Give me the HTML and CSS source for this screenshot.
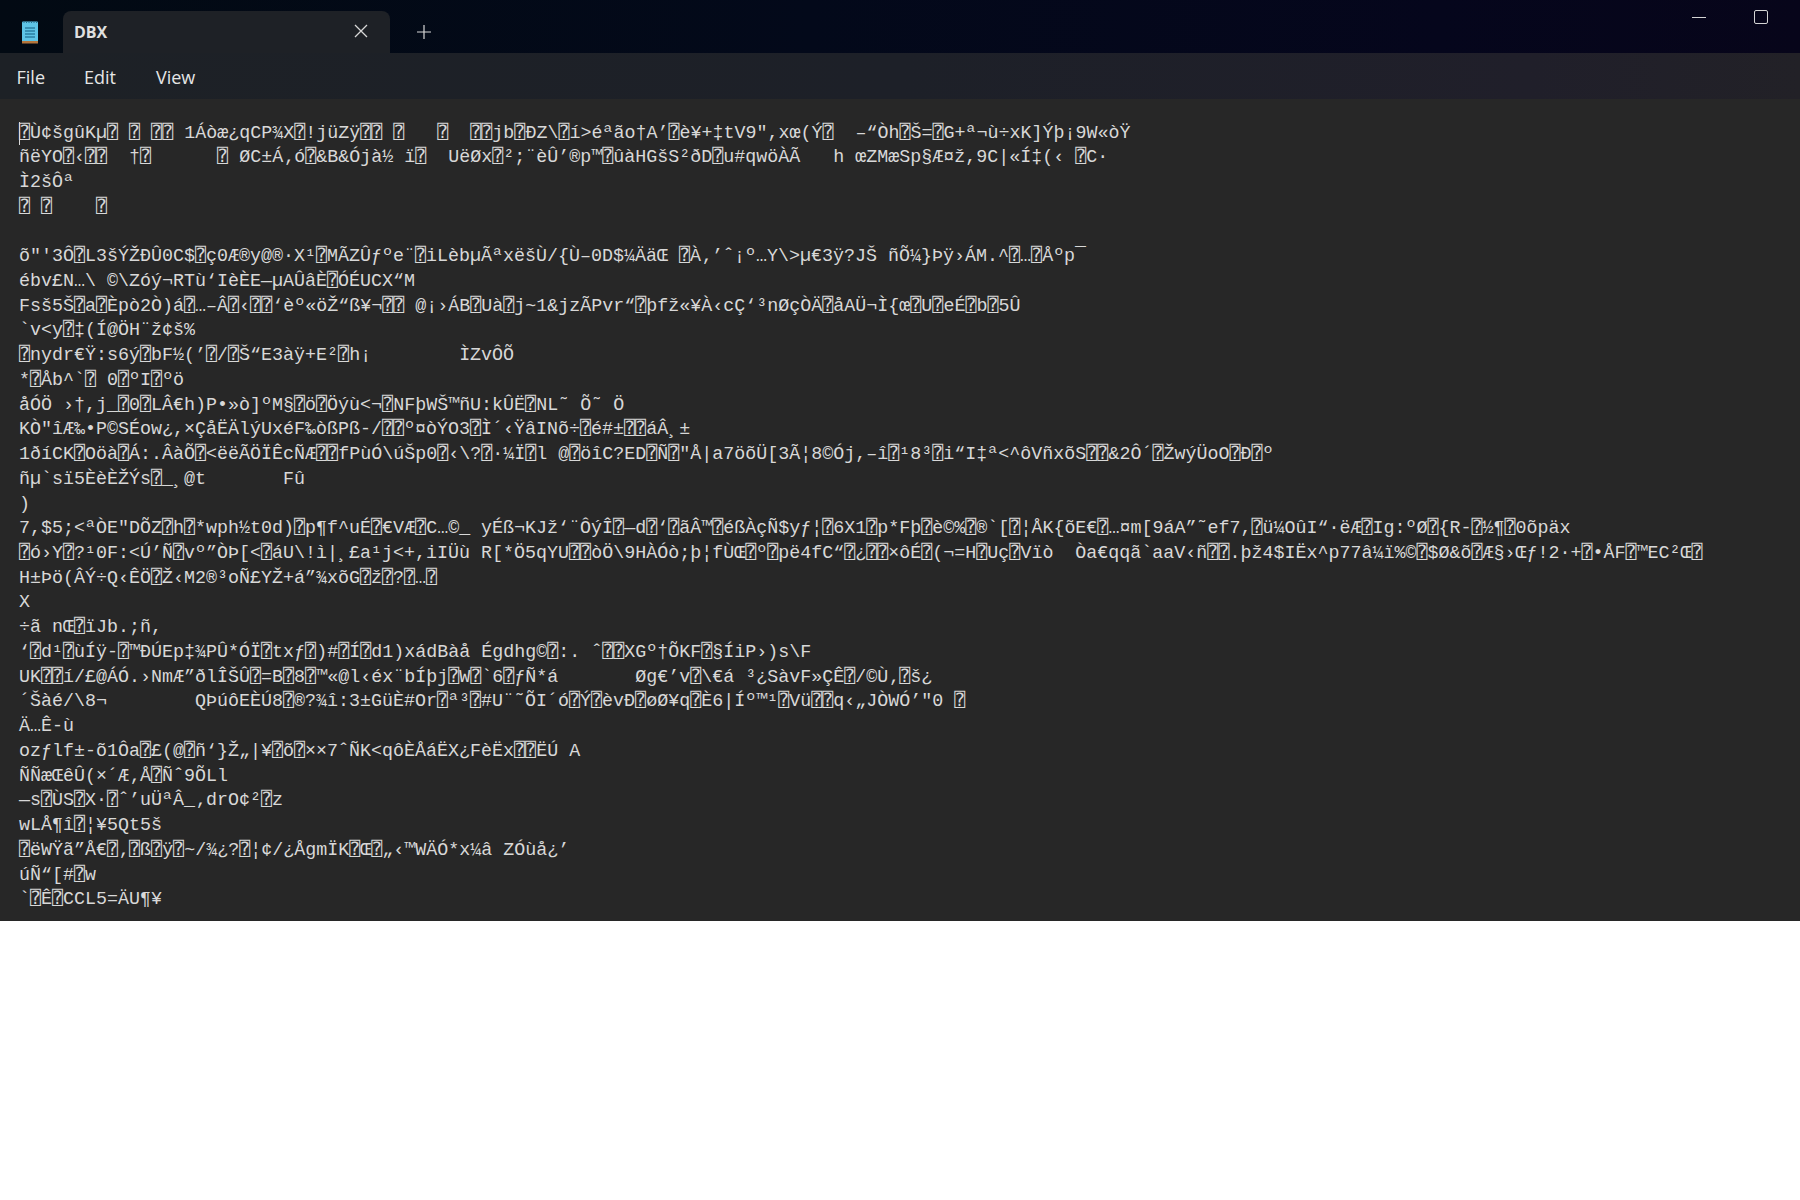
FILE: index.html
```
<!DOCTYPE html>
<html lang="en">
<head>
<meta charset="utf-8">
<title>DBX - Notepad</title>
<link rel="stylesheet" href="styles.css">
</head>
<body>
<div class="window">
  <header class="titlebar">
    <svg class="app-icon" width="18" height="24" viewBox="0 0 18 24" aria-hidden="true">
      <rect x="1" y="1.5" width="16" height="21" rx="1" fill="#5ec4e6"/>
      <rect x="1" y="21" width="16" height="2.5" fill="#b5763c"/>
      <path d="M3 1v2M5.5 1v2M8 1v2M10.5 1v2M13 1v2M15.5 1v2" stroke="#2a6f8c" stroke-width="1"/>
      <path d="M4 8h10M4 11h10M4 14h10M4 17h10" stroke="#2b7fa3" stroke-width="1.4"/>
    </svg>
    <div class="tab">
      <span class="tab-title">DBX</span>
      <svg class="tab-close" width="14" height="14" viewBox="0 0 14 14" aria-hidden="true"><path d="M1 1l12 12M13 1L1 13" stroke="#d8d8d8" stroke-width="1.3" fill="none"/></svg>
    </div>
    <svg class="tab-add" width="14" height="14" viewBox="0 0 14 14" aria-hidden="true"><path d="M7 0v14M0 7h14" stroke="#d8d8d8" stroke-width="1.2" fill="none"/></svg>
    <div class="controls">
      <span class="ctl-min"></span>
      <span class="ctl-max"></span>
    </div>
  </header>
  <nav class="menubar">
    <span class="menu-item menu-file">File</span>
    <span class="menu-item menu-edit">Edit</span>
    <span class="menu-item menu-view">View</span>
  </nav>
  <main class="editor"><span class="caret"></span><pre class="content">⍰Ù¢šgûKµ⍰ ⍰ ⍰⍰ 1Áòæ¿qCP¾X⍰!jüZÿ⍰⍰ ⍰   ⍰  ⍰⍰jb⍰ÐZ\⍰í&gt;éªão†A’⍰è¥+‡tV9",xœ(Ý⍰  –“Òh⍰Š=⍰G+ª¬ù÷xK]Ýþ¡9W«òŸ
ñëYO⍰‹⍰⍰  †⍰      ⍰ ØC±Á‚ó⍰&amp;B&amp;Ójà½ ï⍰  UëØx⍰²;¨èÛ’®p™⍰ûàHGšS²ðD⍰u#qwöÀÃ   h œZMæSp§Æ¤ž,9C|«Í‡(‹ ⍰C·
Ì2šÔª
⍰ ⍰    ⍰

õ"'3Ô⍰L3šÝŽÐÛ0C$⍰ç0Æ®y@®·X¹⍰MÃZÛƒºe¨⍰iLèbµÃªxëšÙ/{Ù–0D$¼ÄäŒ ⍰À‚’ˆ¡º…Y\&gt;µ€3ÿ?JŠ ñÕ¼}Þÿ›ÁM.^⍰…⍰Åºp¯
ébv£N…\ ©\Zóý¬RTù‘IèÈE—µAÛâÈ⍰ÓÉUCX“M
Fsš5Š⍰a⍰Èpò2Ò)á⍰…–Â⍰‹⍰⍰‘èº«öŽ“ß¥¬⍰⍰ @¡›ÁB⍰Uà⍰j~1&amp;jzÃPvr“⍰þfž«¥À‹cÇ‘³nØçÒÄ⍰åAÜ¬Ì{œ⍰U⍰eÉ⍰b⍰5Û
`v&lt;y⍰‡(Í@ÖH¨ž¢š%
⍰nydr€Ÿ:s6ý⍰bF½(’⍰/⍰Š“E3àÿ+E²⍰h¡        ÌZvÔÕ
*⍰Åb^`⍰ 0⍰ºI⍰ºö
åÓÖ ›†,j_⍰0⍰LÂ€h)P•»ò]ºM§⍰ö⍰Öýù&lt;¬⍰NFþWŠ™ñU:kÛË⍰NL˜ Õ˜ Ö
KÒ"îÆ‰•P©SÉow¿,×ÇåËÄlýUxéF‰òßPß-/⍰⍰º¤òÝO3⍰Ì´‹ŸâINõ÷⍰é#±⍰⍰áÂ¸±
1ðíCK⍰Oöà⍰Á:.ÂàÕ⍰&lt;ëëÃÖÏÊcÑÆ⍰⍰fPùÓ\úŠp0⍰‹\?⍰·¼Ï⍰l @⍰öîC?ED⍰Ñ⍰"Å|a7öõÜ[3Ã¦8©Ój,–î⍰¹8³⍰i“I‡ª&lt;^ôVñxõS⍰⍰&amp;2Ô´⍰ŽwýÜoO⍰Ð⍰º
ñµ`sï5ÈèÈŽÝs⍰_¸@t       Fû
)
7,$5;&lt;ªÒE"DÕZ⍰h⍰*wph½t0d)⍰p¶f^uÉ⍰€VÆ⍰C…©_ yÉß¬KJž‘¨ÔýÎ⍰—d⍰‘⍰ãÂ™⍰éßÀçÑ$yƒ¦⍰6X1⍰p*Fþ⍰è©%⍰®`[⍰¦ÅK{õE€⍰…¤m[9áA”˜ef7,⍰ü¼OûI“·ëÆ⍰Ig:ºØ⍰{R-⍰½¶⍰0õpäx
⍰ó›Y⍰?¹0F:&lt;Ú’Ñ⍰vº”ÒÞ[&lt;⍰áU\!ì|¸£a¹j&lt;+,iIÜù R[*Ö5qYU⍰⍰òÖ\9HÀÓò;þ¦fÙŒ⍰º⍰pë4fC“⍰¿⍰⍰×ôÉ⍰(¬=H⍰Uç⍰Vïò  Òa€qqã`aaV‹ñ⍰⍰.þž4$IËx^p77â¼ï%©⍰$Ø&amp;õ⍰Æ§›Œƒ!2·+⍰•ÅF⍰™EC²Œ⍰
H±Þö(ÂÝ÷Q‹ÊÖ⍰Ž‹M2®³oÑ£YŽ+á”¾xõG⍰ž⍰?⍰…⍰
X
÷ã nŒ⍰ïJb.;ñ,
‘⍰d¹⍰ùÍÿ-⍰™ÐÚEp‡¾PÛ*ÓÏ⍰txƒ⍰)#⍰Í⍰d1)xádBàå Égdhg©⍰:. ˆ⍰⍰XGº†ÕKF⍰§ÍiP›)s\F
UK⍰⍰í/£@ÁÓ.›NmÆ”ðlÎŠÛ⍰=B⍰8⍰™«@l‹éx¨bÍþj⍰W⍰`6⍰ƒÑ*á       Øg€’v⍰\€á ³¿SàvF»ÇÊ⍰/©Ù‚⍰š¿
´Šàé/\8¬        QÞúôEÈÚ8⍰®?¾î:3±GüÈ#Or⍰ª³⍰#U¨˜ÕI´ó⍰Ý⍰èvÐ⍰øØ¥q⍰È6|Íº™¹⍰Vü⍰⍰q‹„JÒWÓ’"0 ⍰
Ä…Ê-ù
ozƒlf±-õ1Ôa⍰£(@⍰ñ‘}Ž„|¥⍰õ⍰××7ˆÑK&lt;qôÈÅáËX¿FèËx⍰⍰ËÚ A
ÑÑæŒêÛ(×´Æ‚Å⍰Ñˆ9ÕLl
—s⍰ÙS⍰X·⍰ˆ’uÜªÂ_‚drO¢²⍰z
wLÅ¶î⍰¦¥5Qt5š
⍰ëWŸã”Å€⍰‚⍰ß⍰ÿ⍰~/¾¿?⍰¦¢/¿ÅgmÏK⍰Œ⍰„‹™WÄÓ*x¼â ZÓùå¿’
úÑ“[#⍰w
`⍰Ê⍰CCL5=ÄU¶¥</pre></main>
</div>
</body>
</html>
```
FILE: styles.css
```
* { box-sizing: border-box; }
html, body { margin: 0; padding: 0; background: #fff; }
body { width: 1800px; height: 1200px; overflow: hidden; }
.window { height: 921px; display: flex; flex-direction: column; overflow: hidden; }
.titlebar {
  height: 53px;
  flex: none;
  display: flex;
  align-items: flex-end;
  padding-left: 21px;
  background: linear-gradient(90deg, #020a13 0%, #03091a 45%, #05061c 80%, #07051a 100%);
}
.app-icon { margin-bottom: 9px; flex: none; }
.tab {
  width: 327px;
  height: 42px;
  margin-left: 24px;
  padding: 0 22px 0 11px;
  background: #1e2126;
  border-radius: 8px 8px 0 0;
  display: flex;
  align-items: center;
  justify-content: space-between;
  flex: none;
}
.tab-title { font: 700 16px "Open Sans", sans-serif; color: #e0e0e0; }
.tab-close { display: block; margin-top: -2px; }
.tab-add { margin: 0 0 14px 27px; flex: none; }
.controls { margin-left: auto; align-self: flex-start; display: flex; align-items: flex-start; padding: 10px 32px 0 0; }
.ctl-min { width: 14px; height: 1.5px; margin-top: 6.5px; background: #d4d4d4; }
.ctl-max { width: 14px; height: 14px; margin-left: 48px; border: 1.5px solid #d4d4d4; border-radius: 2px; }
.menubar {
  height: 46px;
  flex: none;
  display: flex;
  align-items: center;
  padding: 1px 0 0 16.5px;
  background: linear-gradient(90deg, #1d2126 0%, #1d2028 50%, #201f2a 85%, #222127 100%);
}
.menu-item { font: 400 18px "Open Sans", sans-serif; color: #e6e6e6; }
.menu-edit { margin-left: 39px; }
.menu-view { margin-left: 40px; }
.editor { flex: 1; position: relative; background: #272727; padding: 22.5px 0 0 19px; }
.caret { position: absolute; left: 19px; top: 23px; width: 1px; height: 23px; background: #d8d8d8; }
.content {
  margin: 0;
  font-family: "Liberation Mono", "DejaVu Sans Mono", monospace;
  font-size: 18.34px;
  line-height: 24.74px;
  color: #d8d8d8;
  white-space: pre;
}
```
